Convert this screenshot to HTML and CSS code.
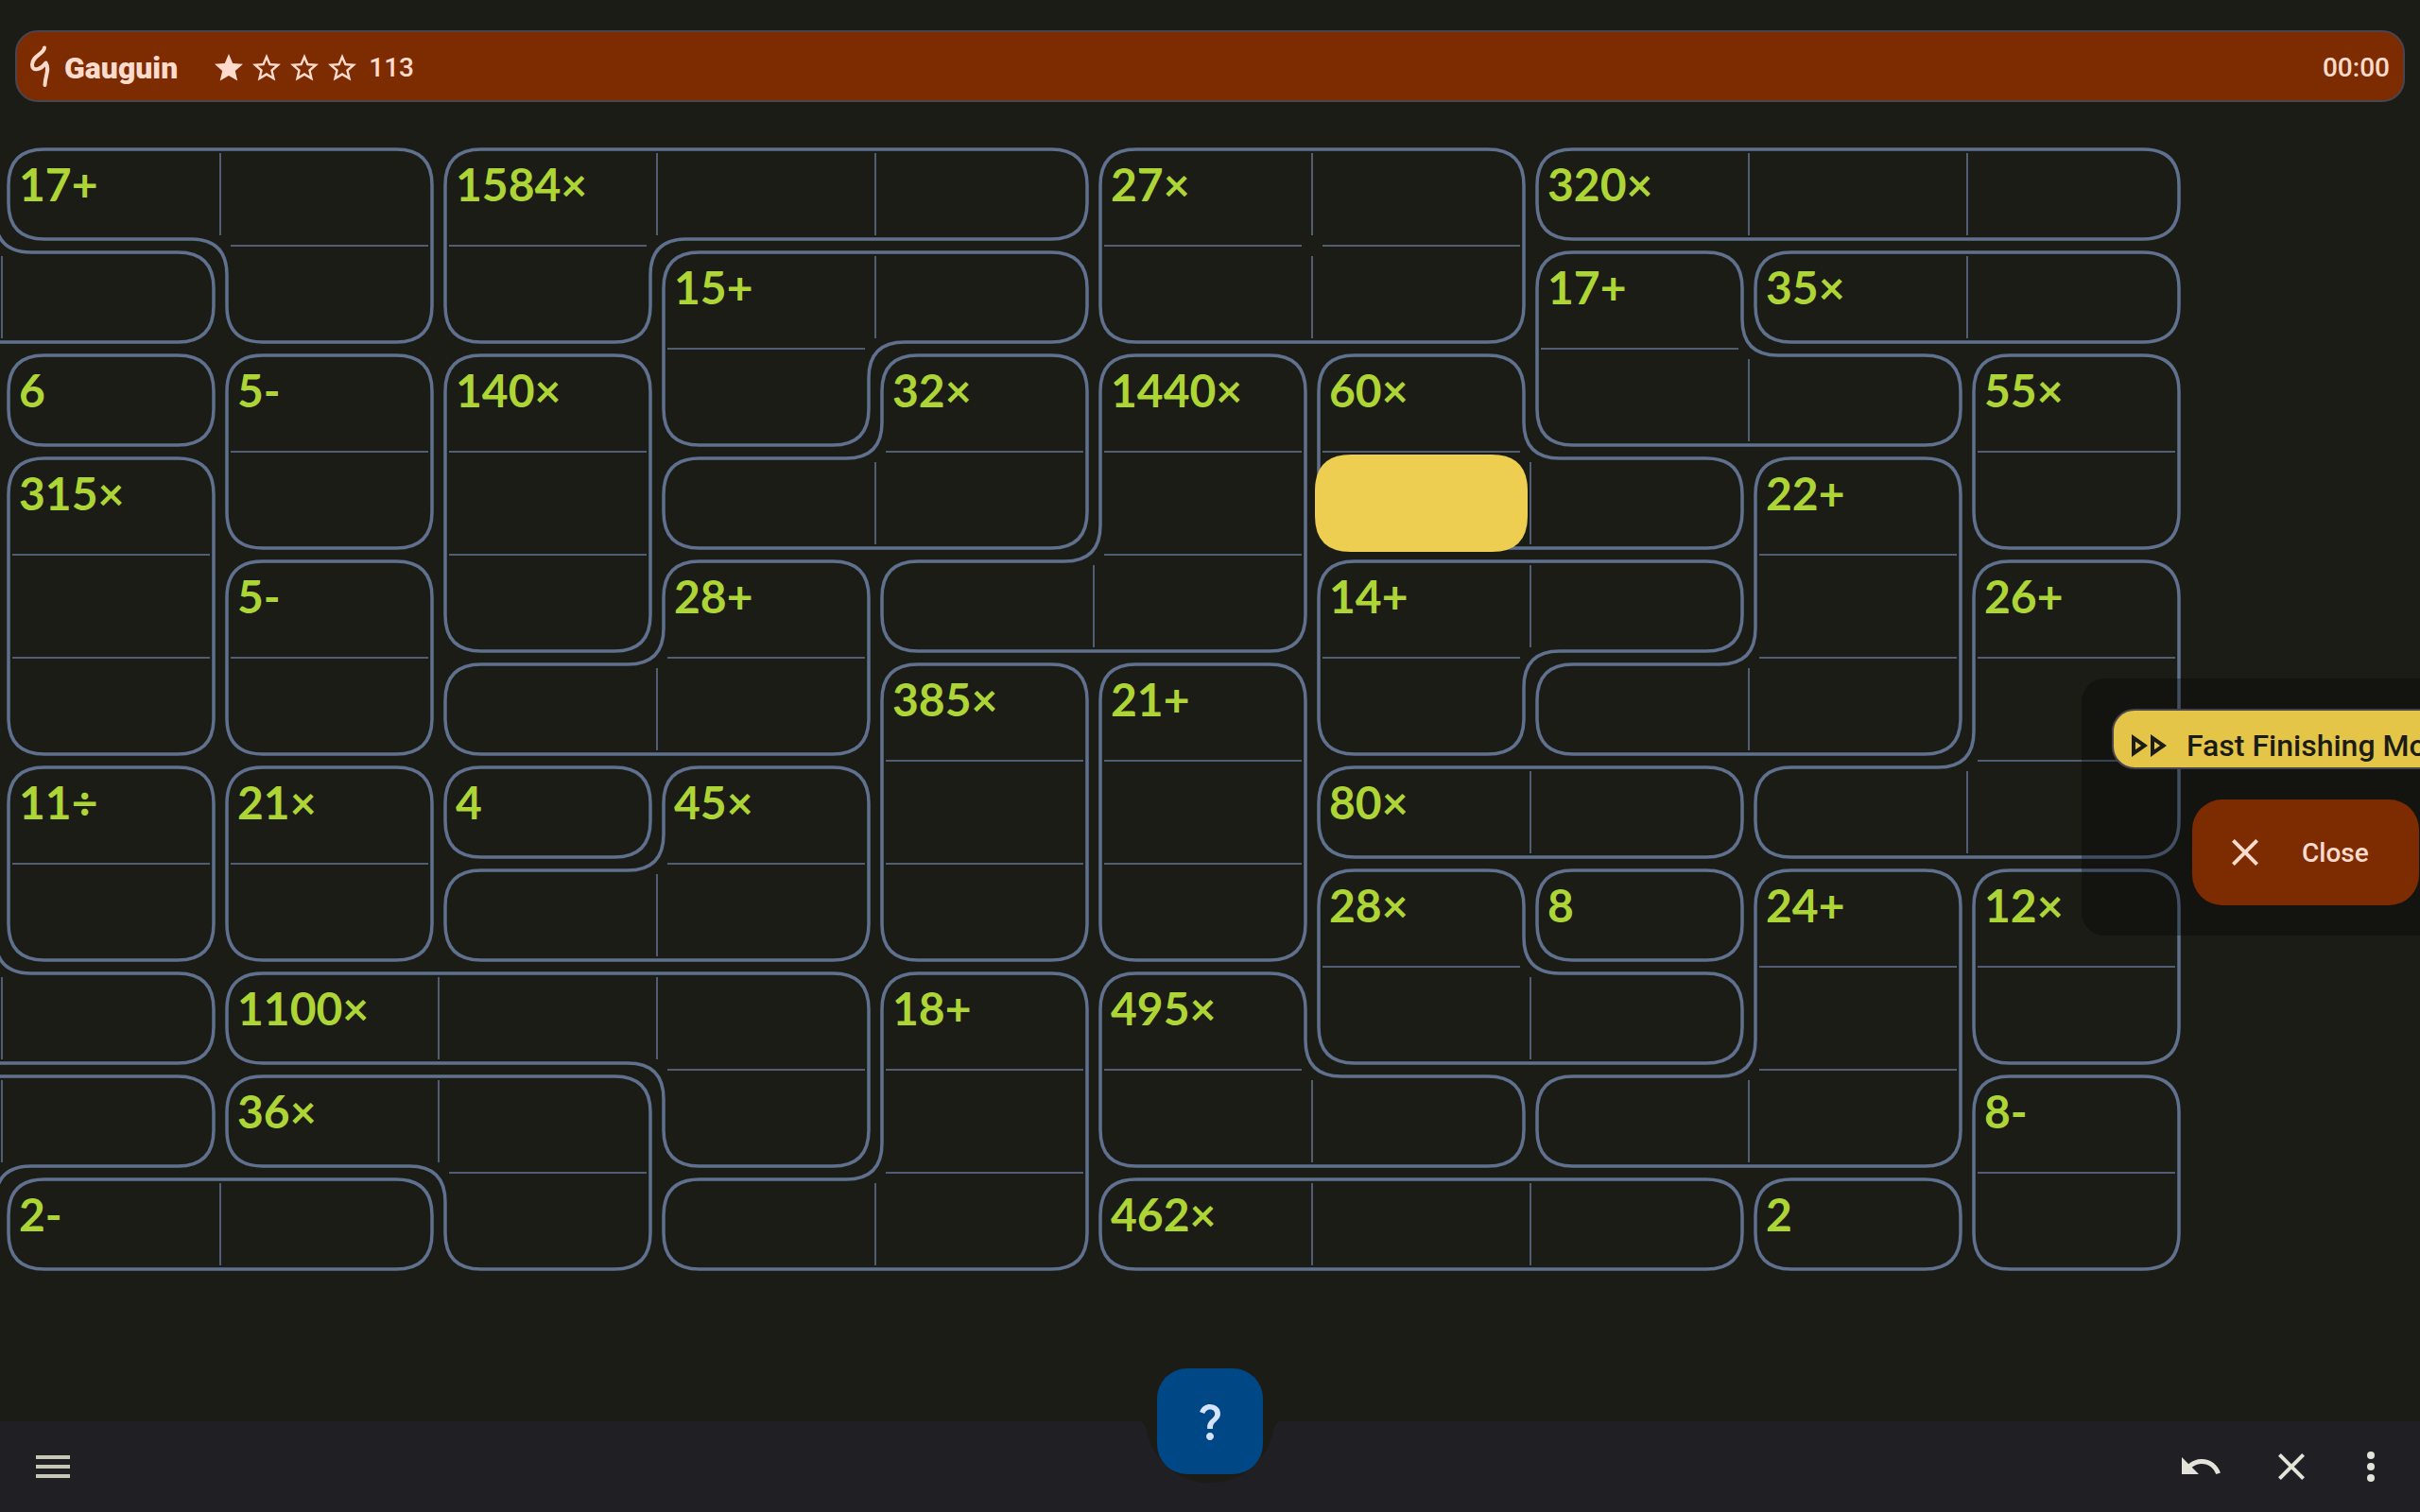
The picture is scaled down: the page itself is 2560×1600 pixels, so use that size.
FILE: index.html
```html
<!DOCTYPE html>
<html lang="en">
<head>
<meta charset="utf-8">
<meta name="viewport" content="width=device-width, initial-scale=1">
<title>Gauguin</title>
<link rel="stylesheet" href="styles.css">
</head>
<body>
<div class="app">
  <header class="topbar">
    <svg class="logo" viewBox="0 0 24 48" aria-hidden="true"><path d="M17 2.5C16.500 9 4 11 4 20.500C4 29 14 25 18.500 18.500C23 26 17.500 32 17.500 42"/></svg>
    <h1 class="title">Gauguin</h1>
    <div class="rating" role="img" aria-label="Difficulty 1 of 4">
      <svg class="star" viewBox="0 0 24 24"><path d="M12,17.27L18.18,21l-1.64,-7.03L22,9.24l-7.19,-0.61L12,2 9.19,8.63 2,9.24l5.46,4.73L5.82,21z"/></svg>
      <svg class="star" viewBox="0 0 24 24"><path d="M22,9.24l-7.19,-0.62L12,2 9.19,8.63 2,9.24l5.46,4.73L5.82,21 12,17.27 18.18,21l-1.63,-7.03L22,9.24zM12,15.4l-3.76,2.27 1,-4.28 -3.32,-2.88 4.38,-0.38L12,6.1l1.71,4.04 4.38,0.38 -3.32,2.88 1,4.28L12,15.4z"/></svg>
      <svg class="star" viewBox="0 0 24 24"><path d="M22,9.24l-7.19,-0.62L12,2 9.19,8.63 2,9.24l5.46,4.73L5.82,21 12,17.27 18.18,21l-1.63,-7.03L22,9.24zM12,15.4l-3.76,2.27 1,-4.28 -3.32,-2.88 4.38,-0.38L12,6.1l1.71,4.04 4.38,0.38 -3.32,2.88 1,4.28L12,15.4z"/></svg>
      <svg class="star" viewBox="0 0 24 24"><path d="M22,9.24l-7.19,-0.62L12,2 9.19,8.63 2,9.24l5.46,4.73L5.82,21 12,17.27 18.18,21l-1.63,-7.03L22,9.24zM12,15.4l-3.76,2.27 1,-4.28 -3.32,-2.88 4.38,-0.38L12,6.1l1.71,4.04 4.38,0.38 -3.32,2.88 1,4.28L12,15.4z"/></svg>
    </div>
    <span class="score">113</span>
    <time class="timer">00:00</time>
  </header>

  <main class="stage">
    <div class="board" id="board">
      <svg class="cages" id="cages" aria-hidden="true"></svg>
    </div>
    <aside class="panel">
      <div class="chip">
        <svg class="chip-icon" viewBox="0 0 38 24" aria-hidden="true"><path d="M0,0v24l17,-12zM4,7.72L10.06,12 4,16.28zM20,0v24l17,-12zM24,7.72L30.06,12 24,16.28z" fill-rule="evenodd"/></svg>
        <span>Fast Finishing Mode</span>
      </div>
      <button class="close" type="button">
        <svg class="icon" viewBox="0 0 24 24" aria-hidden="true"><path d="M19,6.41L17.59,5 12,10.59 6.41,5 5,6.41 10.59,12 5,17.59 6.41,19 12,13.41 17.59,19 19,17.59 13.41,12z"/></svg>
        <span>Close</span>
      </button>
    </aside>
  </main>

  <footer class="bottombar">
    <button class="tool menu" type="button" aria-label="Menu"><svg class="icon" viewBox="0 0 24 24"><path d="M3,18h18v-2H3v2zM3,13h18v-2H3v2zM3,6v2h18V6H3z"/></svg></button>
    <div class="actions">
      <button class="tool" type="button" aria-label="Undo"><svg class="icon" viewBox="0 0 24 24"><path d="M12.5,8c-2.65,0 -5.05,0.99 -6.9,2.6L2,7v9h9l-3.62,-3.62c1.39,-1.16 3.16,-1.88 5.12,-1.88 3.54,0 6.55,2.31 7.6,5.5l2.37,-0.78C21.08,11.03 17.15,8 12.5,8z"/></svg></button>
      <button class="tool" type="button" aria-label="Erase"><svg class="icon" viewBox="0 0 24 24"><path d="M19,6.41L17.59,5 12,10.59 6.41,5 5,6.41 10.59,12 5,17.59 6.41,19 12,13.41 17.59,19 19,17.59 13.41,12z"/></svg></button>
      <button class="tool more" type="button" aria-label="More options"><svg class="icon" viewBox="0 0 24 24"><circle cx="12" cy="6" r="2"/><circle cx="12" cy="12" r="2"/><circle cx="12" cy="18" r="2"/></svg></button>
    </div>
    <svg class="notch" viewBox="0 0 160 70" aria-hidden="true"><path d="M0 0H4Q11 0 13 9A68 68 0 0 0 147 9Q149 0 156 0H160Z"/></svg>
    <button class="fab" type="button" aria-label="Hint"><svg class="icon" viewBox="0 0 24 24"><path d="M11.07,12.85c0.77,-1.39 2.25,-2.21 3.11,-3.44c0.91,-1.29 0.4,-3.7 -2.18,-3.7c-1.69,0 -2.52,1.28 -2.87,2.34L6.54,6.96C7.25,4.83 9.18,3 11.99,3c2.35,0 3.96,1.07 4.78,2.41c0.7,1.15 1.11,3.3 0.03,4.9c-1.2,1.77 -2.35,2.31 -2.97,3.45c-0.25,0.46 -0.35,0.76 -0.35,2.24h-2.89C10.58,15.22 10.46,13.95 11.07,12.85zM14,20c0,1.1 -0.9,2 -2,2s-2,-0.9 -2,-2c0,-1.1 0.9,-2 2,-2S14,18.9 14,20z"/></svg></button>
  </footer>
</div>
<script src="board.js"></script>
</body>
</html>
```
FILE: styles.css
```css
* { box-sizing: border-box; }

body {
  margin: 0;
  background: #1c1c17;
  color: #ffdbcd;
  font-family: Roboto, "Liberation Sans", sans-serif;
  overflow: hidden;
}

button {
  border: 0;
  padding: 0;
  background: none;
  color: inherit;
  font: inherit;
}

.app {
  display: flex;
  flex-direction: column;
  min-height: 100vh;
}

.icon {
  display: block;
  width: 48px;
  height: 48px;
  fill: currentColor;
}

/* Top bar */
.topbar {
  display: flex;
  align-items: center;
  height: 76px;
  margin: 32px 16px 0;
  padding: 4px 14px 0 12px;
  border: 2px solid #49454f;
  border-radius: 24px;
  background: #7d2b00;
}

.logo {
  width: 24px;
  height: 48px;
  fill: none;
  stroke: currentColor;
  stroke-width: 4;
  stroke-linecap: round;
  stroke-linejoin: round;
}

.title {
  margin: 0 36px 0 14px;
  font-size: 32px;
  line-height: 40px;
  font-weight: 900;
}

.rating {
  display: flex;
  gap: 4px;
}

.star {
  width: 36px;
  height: 36px;
  fill: currentColor;
}

.score {
  margin-left: 10px;
  font-size: 28px;
  line-height: 40px;
  font-weight: 500;
}

.timer {
  margin-left: auto;
  font-size: 28px;
  line-height: 40px;
  font-weight: 500;
}

/* Puzzle board */
.stage {
  position: relative;
  flex: 1;
  padding-top: 43px;
  overflow: hidden;
}

.board {
  position: relative;
  display: grid;
  grid-template-columns: repeat(11, 231px);
  grid-auto-rows: 109px;
  width: max-content;
  margin-left: -229px;
}

.cages {
  position: absolute;
  inset: 0;
  width: 100%;
  height: 100%;
}

.cage {
  fill: none;
  stroke: #5f718e;
  stroke-width: 3.5;
}

.divider {
  stroke: #505d73;
  stroke-width: 2;
}

.selected { fill: #edce50; }

.cell {
  display: flex;
  align-items: flex-start;
  padding: 14px 18px 0;
  color: #aed536;
  font-family: Lato, "Open Sans", sans-serif;
  font-size: 48px;
  line-height: 60px;
  font-weight: 700;
}

/* Floating panel, partly slid off the right edge */
.panel {
  position: absolute;
  top: 610px;
  right: -116px;
  display: flex;
  flex-direction: column;
  align-items: center;
  gap: 32px;
  padding: 32px;
  border-radius: 24px;
  background: rgba(0, 0, 0, 0.3);
}

.chip {
  display: flex;
  align-items: center;
  gap: 20px;
  width: 410px;
  height: 64px;
  padding: 14px 0 0 19px;
  border: 2px solid #49454f;
  border-radius: 24px;
  background: #e4c548;
  color: #1c1c17;
  font-size: 32px;
  line-height: 40px;
  font-weight: 500;
  white-space: nowrap;
}

.chip-icon {
  width: 38px;
  height: 24px;
  fill: currentColor;
}

.close {
  display: flex;
  align-items: center;
  gap: 36px;
  width: 240px;
  height: 112px;
  padding-left: 32px;
  border-radius: 32px;
  background: #7d2b00;
  font-size: 28px;
  line-height: 40px;
  font-weight: 500;
}

.close span { padding-top: 2px; }

/* Bottom bar */
.bottombar {
  position: relative;
  display: flex;
  align-items: center;
  justify-content: space-between;
  height: 96px;
  padding: 0 28px 0 32px;
  background: #201f24;
}

.tool { color: #e4e3d9; }
.menu { color: #c7c8b6; }

.actions {
  display: flex;
  gap: 48px;
}

.more { margin-left: -12px; }

.notch {
  position: absolute;
  top: 0;
  left: calc(50% - 80px);
  width: 160px;
  height: 70px;
  fill: #1c1c17;
}

.fab {
  position: absolute;
  top: -56px;
  left: calc(50% - 56px);
  display: grid;
  place-items: center;
  width: 112px;
  height: 112px;
  border-radius: 32px;
  background: #004885;
  color: #d5e3ff;
}
```
FILE: board.js
```js
// Each letter is one cage; dots are cells outside the visible cages.
const layout = [
  "aAABBBCCDDD",
  "aaABEECCFGG",
  ".HIJEKLMFFN",
  ".OIJKKLMMPN",
  ".OQJRLLSSPT",
  ".OQRRUVSPPT",
  ".WXYZUVbbTT",
  "gWXZZUVcdef",
  "gghhhijccef",
  "kkllhijjeem",
  "knnliiooopm"
];

const hints = {
  A: "17+", B: "1584×", C: "27×", D: "320×", E: "15+", F: "17+", G: "35×",
  H: "6", I: "5-", J: "140×", K: "32×", L: "1440×", M: "60×", N: "55×",
  O: "315×", P: "22+", Q: "5-", R: "28+", S: "14+", T: "26+", U: "385×",
  V: "21+", W: "11÷", X: "21×", Y: "4", Z: "45×", b: "80×", c: "28×",
  d: "8", e: "24+", f: "12×", h: "1100×", i: "18+", j: "495×", l: "36×",
  m: "8-", n: "2-", o: "462×", p: "2"
};

const W = 231, H = 109, INSET = 7, RADIUS = 38, TRIM = 11;
const board = document.getElementById("board");
const svg = document.getElementById("cages");
const at = (x, y) => (layout[y] && layout[y][x]) || "";

function add(tag, attrs) {
  const el = document.createElementNS("http://www.w3.org/2000/svg", tag);
  for (const name in attrs) el.setAttribute(name, attrs[name]);
  svg.appendChild(el);
}

// Replaces every corner of a closed polygon by a quadratic curve.
function rounded(points) {
  const toward = (p, q) => {
    const d = Math.hypot(q[0] - p[0], q[1] - p[1]);
    const t = Math.min(RADIUS, d / 2) / d;
    return (p[0] + (q[0] - p[0]) * t) + " " + (p[1] + (q[1] - p[1]) * t);
  };
  const n = points.length;
  return points.map((p, i) => {
    const before = points[(i + n - 1) % n], after = points[(i + 1) % n];
    return (i ? "L" : "M") + toward(p, before) + "Q" + p.join(" ") + " " + toward(p, after);
  }).join("") + "Z";
}

// Walks clockwise round a cage, starting at its first cell's top-left corner.
function outline(id, x0, y0) {
  const dirs = [[1, 0], [0, 1], [-1, 0], [0, -1]];
  const inside = (x, y, d) => {
    const [cx, cy] = [[x, y], [x - 1, y], [x - 1, y - 1], [x, y - 1]][d];
    return at(cx, cy) === id;
  };
  const points = [];
  let x = x0, y = y0, d = 0, last = 3;
  do {
    if (d !== last) {
      const nx = [0, -1, 0, 1], ny = [1, 0, -1, 0];
      points.push([
        x * W + (nx[d] + nx[last]) * INSET,
        y * H + (ny[d] + ny[last]) * INSET
      ]);
    }
    last = d;
    x += dirs[d][0];
    y += dirs[d][1];
    const left = (d + 3) % 4;
    if (inside(x, y, left)) d = left;
    else if (!inside(x, y, d)) d = (d + 1) % 4;
  } while (x !== x0 || y !== y0);
  return points;
}

const seen = new Set(["."]);
layout.forEach((row, y) => [...row].forEach((id, x) => {
  if (id !== "." && id === at(x + 1, y)) {
    add("line", { class: "divider", x1: (x + 1) * W, x2: (x + 1) * W, y1: y * H + TRIM, y2: (y + 1) * H - TRIM });
  }
  if (id !== "." && id === at(x, y + 1)) {
    add("line", { class: "divider", x1: x * W + TRIM, x2: (x + 1) * W - TRIM, y1: (y + 1) * H, y2: (y + 1) * H });
  }
  const cell = document.createElement("div");
  cell.className = "cell";
  if (!seen.has(id)) {
    seen.add(id);
    add("path", { class: "cage", d: rounded(outline(id, x, y)) });
    cell.textContent = hints[id] || "";
  }
  board.appendChild(cell);
}));

// Highlight of the selected cell.
const sx = 7 * W, sy = 3 * H;
add("path", {
  class: "selected",
  d: rounded([[sx + 3, sy + 3], [sx + W - 3, sy + 3], [sx + W - 3, sy + H - 3], [sx + 3, sy + H - 3]])
});
```
